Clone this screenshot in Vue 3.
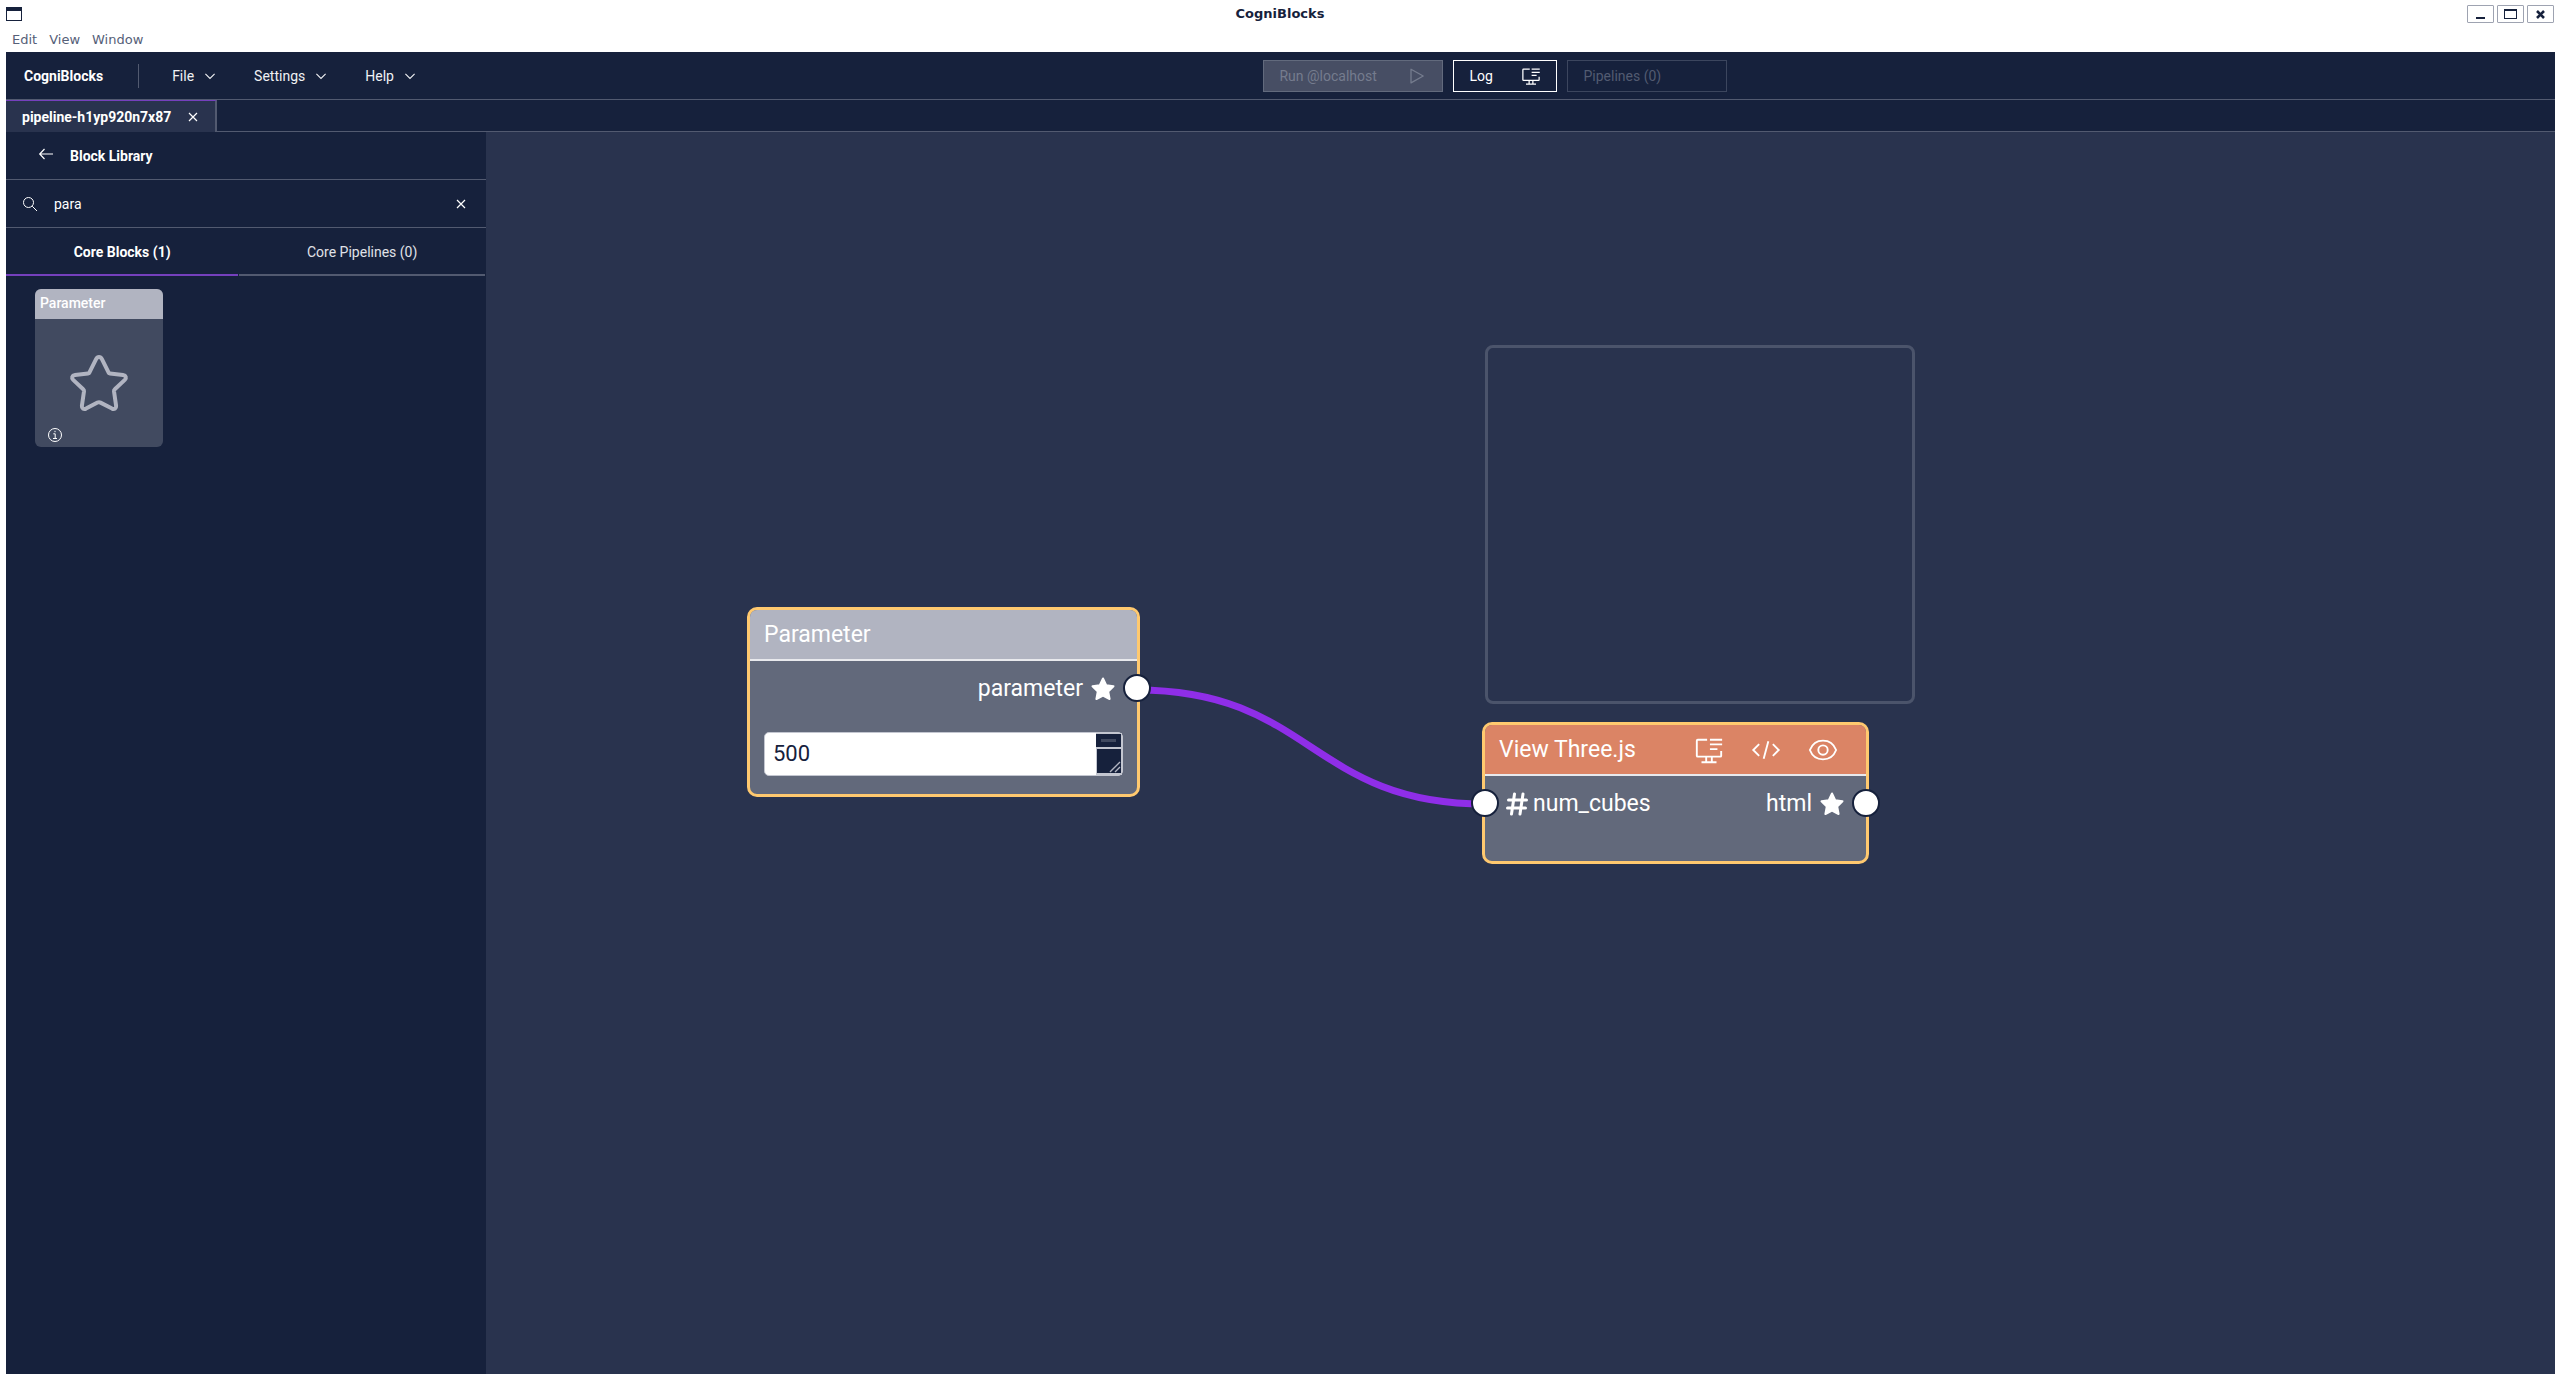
<script setup>
import { ref } from 'vue'

const menus = ['File', 'Settings', 'Help']
const search = ref('para')
const value = ref('500')
</script>

<template>
  <div class="window">
    <header class="titlebar">
      <span class="app-icon" aria-hidden="true"></span>
      <h1>CogniBlocks</h1>
      <div class="win-buttons">
        <button type="button" aria-label="Minimize">
          <svg width="25" height="16" viewBox="0 0 25 16"><path d="M8 11h9v2H8z" fill="#16213c" /></svg>
        </button>
        <button type="button" aria-label="Maximize">
          <svg width="25" height="16" viewBox="0 0 25 16"><path d="M6 3h13v10H6zM7 5v7h11V5z" fill="#16213c" fill-rule="evenodd" /></svg>
        </button>
        <button type="button" aria-label="Close">
          <svg width="25" height="16" viewBox="0 0 25 16"><path d="M9 5l7 7M16 5l-7 7" stroke="#16213c" stroke-width="2.6" /></svg>
        </button>
      </div>
    </header>
    <nav class="menubar">
      <a href="#">Edit</a><a href="#">View</a><a href="#">Window</a>
    </nav>

    <div class="app">
      <div class="header">
        <strong class="brand">CogniBlocks</strong>
        <span class="divider"></span>
        <button v-for="m in menus" :key="m" type="button" class="menu">
          {{ m }}
          <svg width="16" height="16" viewBox="0 0 16 16"><path d="M3.4 5.8 8 10.4l4.6-4.6" fill="none" stroke="currentColor" stroke-width="1.1" /></svg>
        </button>
        <div class="actions">
          <button type="button" class="action run" disabled>
            Run @localhost
            <svg width="20" height="20" viewBox="0 0 20 20"><path d="M4 3.3v13.6L16.2 10z" fill="none" stroke="currentColor" stroke-width="1.3" stroke-linejoin="round" /></svg>
          </button>
          <button type="button" class="action log">
            Log
            <svg width="20" height="20" viewBox="0 0 32 32" fill="currentColor"><path d="M17 4h13v2H17zM17 9h13v2H17zM17 14h8v2h-8z" /><path d="M28 17v5H4V6h10V4H4a2 2 0 0 0-2 2v16a2 2 0 0 0 2 2h8v4H8v2h16v-2h-4v-4h8a2 2 0 0 0 2-2v-5zM18 28h-4v-4h4z" /></svg>
          </button>
          <button type="button" class="action pipes" disabled>Pipelines (0)</button>
        </div>
      </div>

      <div class="tabs">
        <div class="tab">
          <span>pipeline-h1yp920n7x87</span>
          <button type="button" class="icon-button" aria-label="Close tab">
            <svg width="16" height="16" viewBox="0 0 16 16"><path d="M4 4l8 8M12 4l-8 8" stroke="currentColor" stroke-width="1.2" /></svg>
          </button>
        </div>
        <div class="tabs-rest"></div>
      </div>

      <div class="main">
        <aside class="sidebar">
          <div class="row library">
            <button type="button" class="icon-button" aria-label="Back">
              <svg width="16" height="20" viewBox="0 0 16 20"><path d="M6.5 3 1.700 8l4.800 5M1.700 8H15" fill="none" stroke="currentColor" stroke-width="1.2" /></svg>
            </button>
            <h2>Block Library</h2>
          </div>
          <div class="row search">
            <svg width="16" height="16" viewBox="0 0 16 16" fill="none" stroke="currentColor"><circle cx="6.5" cy="6.5" r="5" /><path d="M10.2 10.2 15 15" /></svg>
            <input v-model="search" type="text" aria-label="Search blocks" />
            <button type="button" class="icon-button" aria-label="Clear search">
              <svg width="16" height="16" viewBox="0 0 16 16"><path d="M4 4l8 8M12 4l-8 8" stroke="currentColor" stroke-width="1.2" /></svg>
            </button>
          </div>
          <div class="switch">
            <button type="button" class="active">Core Blocks (1)</button>
            <button type="button">Core Pipelines (0)</button>
          </div>
          <div class="blocks">
            <article class="card">
              <h3>Parameter</h3>
              <div class="card-body">
                <svg class="card-star" width="64" height="64" viewBox="0 0 64 64"><path d="M32 6c-1.300 0-2.200.7-2.800 1.900L22.600 21.200c-.3.800-.8 1.100-1.600 1.200L8 24c-3 .4-3.700 3-1.800 4.900l10 9.300c.7.6.9 1.200.8 2.100l-2.100 14.400c-.3 2.700 1.800 4 4.100 2.900l11.500-6c1-.5 2-.5 3 0l11.500 6c2.300 1.100 4.400-.2 4.100-2.900L47 40.300c-.1-.9.1-1.500.8-2.100l10-9.300c1.900-1.900 1.200-4.500-1.800-4.900l-13-1.600c-.8-.1-1.300-.4-1.600-1.200L34.800 7.900C34.200 6.700 33.300 6 32 6z" fill="none" stroke="#b1b4c1" stroke-width="4" stroke-linejoin="round" /></svg>
                <svg class="info" width="16" height="16" viewBox="0 0 16 16" fill="none" stroke="#fff"><circle cx="8" cy="8" r="6.5" /><path d="M6.300 6.800h1.900v4.500M6 11.500h4M8 3.800v1.400" /></svg>
              </div>
            </article>
          </div>
        </aside>

        <main class="canvas">
          <svg class="wire" aria-hidden="true">
            <path d="M651 558C825 558 825 672 999 672" fill="none" stroke="#8f2ee8" stroke-width="7" />
          </svg>
          <div class="preview"></div>

          <section class="node parameter">
            <h2 class="node-head"><span>Parameter</span></h2>
            <div class="ports">
              <span class="port out">parameter
                <svg width="24" height="24" viewBox="0 0 24 24"><path d="M12 1.500 15.200 8.300 22.500 9.200 17.200 14.500 18.600 22 12 18.500 5.400 22 6.800 14.500 1.500 9.200 8.800 8.300z" fill="#fff" stroke="#fff" stroke-width="2" stroke-linejoin="round" /></svg>
              </span>
            </div>
            <div class="field">
              <textarea v-model="value" rows="1" aria-label="Parameter value"></textarea>
              <svg class="scroll" width="26" height="42" viewBox="0 0 26 42" aria-hidden="true">
                <path d="M0 0h26v42H0z" fill="#c3c6d0" /><path d="M0 1h25v13H0zM1 16h24v24H1z" fill="#16213c" />
                <path d="M5 7.500h15" stroke="#414a60" stroke-width="3" /><path d="M14 39 24 29M19 39l5-5" stroke="#b1b4c1" stroke-width="1.4" />
              </svg>
            </div>
            <span class="socket right"></span>
          </section>

          <section class="node view">
            <h2 class="node-head orange">
              <span>View Three.js</span>
              <button type="button" class="icon-button" aria-label="Open in window">
                <svg width="30" height="30" viewBox="0 0 32 32" fill="currentColor"><path d="M17 4h13v2H17zM17 9h13v2H17zM17 14h8v2h-8z" /><path d="M28 17v5H4V6h10V4H4a2 2 0 0 0-2 2v16a2 2 0 0 0 2 2h8v4H8v2h16v-2h-4v-4h8a2 2 0 0 0 2-2v-5zM18 28h-4v-4h4z" /></svg>
              </button>
              <button type="button" class="icon-button" aria-label="Edit code">
                <svg width="30" height="30" viewBox="0 0 32 32" fill="none" stroke="currentColor" stroke-width="2"><path d="M8.700 9.700 2.400 16l6.300 6.300M23.300 9.700l6.300 6.300-6.300 6.300M18.500 6.700l-5 18.600" /></svg>
              </button>
              <button type="button" class="icon-button" aria-label="Preview">
                <svg width="30" height="30" viewBox="0 0 32 32" fill="none" stroke="currentColor" stroke-width="2"><path d="M2 16C4.500 9.500 10 6 16 6s11.500 3.500 14 10c-2.500 6.500-8 10-14 10S4.500 22.500 2 16z" /><circle cx="16" cy="16" r="5" /></svg>
              </button>
            </h2>
            <div class="ports">
              <span class="port in">
                <svg width="24" height="24" viewBox="0 0 24 24"><path d="M9.500 2 6.500 22M18 2l-3 20M3.500 8h18M2.500 16h18" stroke="#fff" stroke-width="3" stroke-linecap="round" /></svg>
                num_cubes</span>
              <span class="port out">html
                <svg width="24" height="24" viewBox="0 0 24 24"><path d="M12 1.500 15.200 8.300 22.500 9.200 17.200 14.500 18.600 22 12 18.500 5.400 22 6.800 14.500 1.500 9.200 8.800 8.300z" fill="#fff" stroke="#fff" stroke-width="2" stroke-linejoin="round" /></svg>
              </span>
            </div>
            <span class="socket left"></span>
            <span class="socket right"></span>
          </section>
        </main>
      </div>
    </div>
  </div>
</template>

<style>
body { margin: 0; background: #fff; }
</style>

<style scoped>
* { box-sizing: border-box; }
h1, h2, h3 { margin: 0; font: inherit; }
button { font: inherit; color: inherit; background: none; border: 0; padding: 0; }
svg { display: block; flex: none; }
.window { min-height: 100vh; display: flex; flex-direction: column; padding: 0 0 2px 6px; font: 14px/20px Roboto, sans-serif; color: #fff; }
.titlebar { height: 27px; display: grid; grid-template-columns: 1fr auto 1fr; align-items: center; padding-right: 1px; font: 700 13px/16px "DejaVu Sans", sans-serif; color: #16213c; }
.app-icon { width: 16px; height: 14px; border: 1px solid #16213c; border-top-width: 4px; }
.win-buttons { display: flex; gap: 3px; justify-content: flex-end; }
.win-buttons button { width: 27px; height: 18px; border: 1px solid #9ea3b1; border-radius: 1px; }
.menubar { height: 25px; display: flex; gap: 12px; padding-left: 6px; font: 13px/25px "DejaVu Sans", sans-serif; }
.menubar a { color: #566078; text-decoration: none; }
.app { flex: 1; display: flex; flex-direction: column; background: #16213c; }
.header { height: 48px; display: flex; align-items: center; border-bottom: 1px solid #525a70; }
.brand { margin: 0 35px 0 18px; font-weight: 700; }
.divider { width: 1px; height: 24px; margin-right: 15px; background: #525a70; }
.menu { display: flex; align-items: center; gap: 8px; padding: 0 18px; color: #f0f1f4; }
.actions { display: flex; gap: 10px; margin: 0 auto; }
.action { height: 32px; display: flex; align-items: center; justify-content: space-between; padding: 0 15px; border: 1px solid #fff; }
.run { width: 180px; background: #474e64; border-color: #626a7d; color: #757c8e; }
.log { width: 104px; }
.pipes { width: 160px; border-color: #3c465e; color: #525b71; }
.tabs { height: 32px; display: flex; }
.tab { min-width: 211px; display: flex; align-items: center; justify-content: space-between; gap: 8px; padding: 0 14px 0 16px; border-top: 1px solid #7540bd; border-right: 2px solid #525a70; background: #29334e; font-weight: 700; }
.tabs-rest { flex: 1; border-bottom: 1px solid #525a70; }
.main { flex: 1; display: flex; }
.sidebar { width: 480px; flex: none; }
.row { height: 48px; display: flex; align-items: center; border-bottom: 1px solid #525a70; }
.library { gap: 16px; padding-left: 32px; font-weight: 700; }
.search { gap: 16px; padding: 0 17px 0 16px; }
.search input { flex: 1; border: 0; outline: 0; padding: 0; background: none; color: #fff; font: inherit; }
.switch { height: 48px; display: flex; gap: 1px; padding-right: 1px; }
.switch button { flex: 1 1 auto; padding: 1px 67px 0; border-bottom: 2px solid #525a70; color: #e0e2e8; white-space: nowrap; }
.switch .active { border-color: #7540bd; color: #fff; font-weight: 700; }
.blocks { padding: 13px 29px; }
.card { width: 128px; border-radius: 6px; overflow: hidden; background: #414a60; }
.card h3 { height: 30px; padding: 0 5px; background: #b1b4c1; font-weight: 500; line-height: 28px; }
.card-body { height: 128px; display: flex; flex-direction: column; align-items: center; justify-content: space-between; padding: 32px 12px 4px; }
.info { align-self: flex-start; }
.canvas { flex: 1; position: relative; overflow: hidden; background: #29334e; }
.wire { position: absolute; left: 0; top: 0; width: 100%; height: 100%; }
.preview { position: absolute; left: 999px; top: 213px; width: 430px; height: 359px; border: 3px solid #4b546b; border-radius: 8px; }
.node { position: absolute; border: 3px solid #ffc96f; border-radius: 10px; background: #62697b; font-size: 23px; line-height: 28px; }
.parameter { left: 261px; top: 475px; width: 393px; height: 190px; }
.view { left: 996px; top: 590px; width: 387px; height: 142px; }
.node-head { height: 51px; display: flex; align-items: center; gap: 27px; padding: 0 28px 0 14px; border-bottom: 2px solid #e8e9ed; border-radius: 7px 7px 0 0; background: #b1b4c1; }
.node-head span { margin-right: auto; }
.orange { background: #db8465; }
.ports { display: flex; justify-content: space-between; padding: 14px 22px 0 20px; }
.port { display: flex; align-items: center; gap: 8px; }
.in { gap: 4px; }
.out { margin-left: auto; }
.field { position: relative; margin: 29px 14px 0; }
.field textarea { display: block; width: 100%; height: 44px; padding: 7px 8px; border: 1px solid #c3c6d0; border-radius: 5px; resize: none; overflow: hidden; background: #fff; color: #16213c; font: 22px/28px Roboto, sans-serif; }
.scroll { position: absolute; right: 1px; top: 1px; }
.socket { position: absolute; top: 64px; width: 28px; height: 28px; border: 2px solid #16213c; border-radius: 50%; background: #fff; }
.left { left: -14px; }
.right { right: -14px; }
</style>
